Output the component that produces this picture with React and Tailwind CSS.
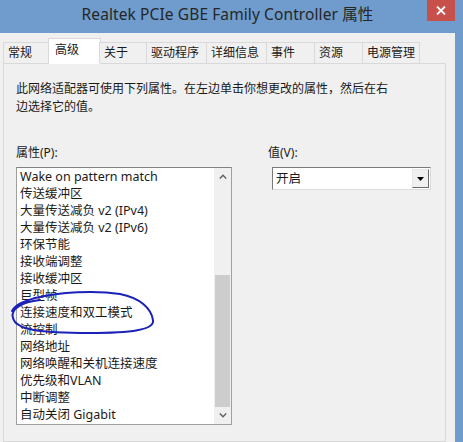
import React from "react";

const tabs = [
  { label: "常规", w: 45 },
  { label: "高级", w: 51, active: true },
  { label: "关于", w: 47 },
  { label: "驱动程序", w: 60 },
  { label: "详细信息", w: 60 },
  { label: "事件", w: 48 },
  { label: "资源", w: 48 },
  { label: "电源管理", w: 57 },
];

const items = [
  "Wake on pattern match",
  "传送缓冲区",
  "大量传送减负 v2 (IPv4)",
  "大量传送减负 v2 (IPv6)",
  "环保节能",
  "接收端调整",
  "接收缓冲区",
  "巨型帧",
  "连接速度和双工模式",
  "流控制",
  "网络地址",
  "网络唤醒和关机连接速度",
  "优先级和VLAN",
  "中断调整",
  "自动关闭 Gigabit",
];

export default function App() {
  return (
    <div className="relative w-[463px] h-[442px] overflow-hidden bg-[#6f9ccc] flex flex-col font-['Noto_Sans','Noto_Sans_CJK_SC',sans-serif] text-[#1a1a1a]">
      {/* Title bar */}
      <div className="relative h-[33px] shrink-0 flex items-start justify-center pr-[8px]">
        <div className="mt-[3px] text-[15.5px] leading-[22px] text-[#262626] tracking-[0.1px]">
          Realtek PCIe GBE Family Controller 属性
        </div>
        <div className="absolute right-[8px] top-0 w-[28px] h-[21px] bg-[#c7504b] flex items-center justify-center">
          <svg width="10" height="9" viewBox="0 0 10 9">
            <path d="M1 0.5 L9 8.5 M9 0.5 L1 8.5" stroke="#fff" strokeWidth="1.8" />
          </svg>
        </div>
      </div>

      {/* Body */}
      <div className="flex-1 mr-[8px] bg-[#f0f0f0] pl-[3px] pr-[9px] flex flex-col">
        {/* Tabs */}
        <div className="flex items-end h-[30px] shrink-0 relative z-10">
          {tabs.map((t, i) =>
            t.active ? (
              <div
                key={i}
                className="h-[26px] -mb-[1px] -mx-[1px] bg-white border border-b-0 border-[#d9d9d9] pl-[6px] pt-[2px] text-[12px] leading-[18px]"
                style={{ width: t.w + 2 }}
              >
                {t.label}
              </div>
            ) : (
              <div
                key={i}
                className="h-[21px] bg-[#f0f0f0] border border-b-0 border-[#d9d9d9] pl-[4px] pt-[1px] text-[12px] leading-[18px] -ml-[1px] first:ml-0"
                style={{ width: t.w + 1 }}
              >
                {t.label}
              </div>
            )
          )}
        </div>

        {/* Panel */}
        <div className="flex-1 border border-[#d9d9d9] bg-[#f0f0f0] pl-[12px] pt-[16px]">
          <div className="text-[12px] leading-[18px] w-[390px]">
            此网络适配器可使用下列属性。在左边单击你想更改的属性，然后在右
            <br />
            边选择它的值。
          </div>

          <div className="flex mt-[28px]">
            {/* Left column */}
            <div className="w-[216px] flex flex-col">
              <div className="text-[12px] leading-[18px] mb-[5px]">属性(P):</div>
              <div className="relative h-[258px] border border-[#a0a0a0] border-t-[#828282] bg-white flex">
                <div className="flex-1 flex flex-col">
                  {items.map((it, i) => (
                    <div key={i} className="h-[17px] pl-[3px] text-[12.5px] leading-[17px] whitespace-nowrap">
                      {it}
                    </div>
                  ))}
                </div>
                {/* Scrollbar */}
                <div className="w-[17px] bg-[#f0f0f0] flex flex-col">
                  <div className="h-[17px] flex items-center justify-center">
                    <svg width="8" height="5" viewBox="0 0 8 5">
                      <path d="M0.8 4.4 L4 1.2 L7.2 4.4" fill="none" stroke="#606060" strokeWidth="1.4" />
                    </svg>
                  </div>
                  <div className="flex-1" />
                  <div className="h-[132px] mx-[1px] bg-[#cdcdcd]" />
                  <div className="h-[17px] flex items-center justify-center">
                    <svg width="8" height="5" viewBox="0 0 8 5">
                      <path d="M0.8 0.6 L4 3.8 L7.2 0.6" fill="none" stroke="#606060" strokeWidth="1.4" />
                    </svg>
                  </div>
                </div>
              </div>
            </div>

            {/* Right column */}
            <div className="ml-[36px] flex flex-col">
              <div className="text-[12px] leading-[18px] mb-[5px]">值(V):</div>
              <div className="ml-[4px] w-[159px] h-[23px] border border-[#7a7a7a] border-b-[#dcdcdc] border-r-[#dcdcdc] bg-white flex items-stretch">
                <div className="flex-1 pl-[3px] text-[12.5px] leading-[21px]">开启</div>
                <div className="w-[17px] my-[1px] mr-[1px] bg-[#f0f0f0] border border-[#e8e8e8] border-r-[#6a6a6a] border-b-[#6a6a6a] flex items-center justify-center">
                  <svg width="7" height="4" viewBox="0 0 7 4">
                    <path d="M0 0 L7 0 L3.5 4 Z" fill="#000" />
                  </svg>
                </div>
              </div>
            </div>
          </div>
        </div>
      </div>

      {/* Hand-drawn annotation */}
      <svg className="absolute left-0 top-0 pointer-events-none" width="463" height="442" viewBox="0 0 463 442">
        <path
          d="M40 300 C22 302 10 309 13 318 C16 330 40 333 90 333 C130 333 155 330 153 320 C151 308 140 298 120 294 C95 290 60 292 35 298 C25 301 16 304 12 311"
          fill="none"
          stroke="#1c22b8"
          strokeWidth="2"
          strokeLinecap="round"
        />
      </svg>
    </div>
  );
}
